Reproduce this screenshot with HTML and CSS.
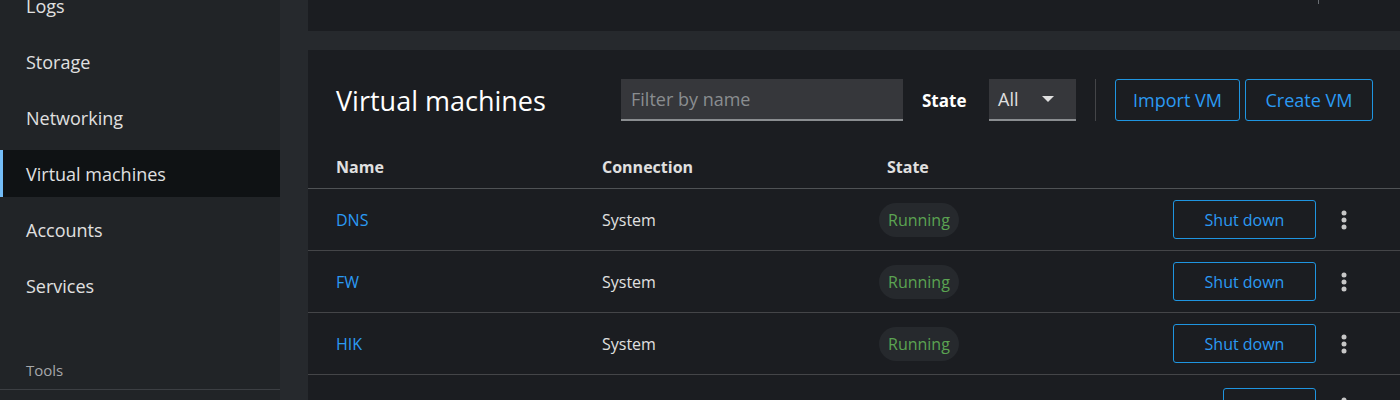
FILE: index.html
```html
<!DOCTYPE html>
<html lang="en">
<head>
    <meta charset="UTF-8">
    <title>Virtual machines</title>
    <link rel="stylesheet" href="styles.css">
</head>
<body>
    <nav class="sidebar">
        <ul class="nav-list">
            <li class="nav-item">Logs</li>
            <li class="nav-item">Storage</li>
            <li class="nav-item">Networking</li>
            <li class="nav-item active">Virtual machines</li>
            <li class="nav-item">Accounts</li>
            <li class="nav-item">Services</li>
        </ul>
        <div class="nav-section">
            <div class="nav-section-title">Tools</div>
            <ul class="nav-list">
                <li class="nav-item">Applications</li>
            </ul>
        </div>
    </nav>

    <main class="page">
        <div class="top-card">
            <span class="top-divider"></span>
        </div>

        <section class="card">
            <div class="card-header">
                <h1 class="card-title">Virtual machines</h1>
                <div class="toolbar">
                    <input class="filter" type="text" placeholder="Filter by name">
                    <span class="toolbar-label">State</span>
                    <div class="select">
                        <span>All</span>
                        <svg width="12" height="8" viewBox="0 0 12 8"><path d="M0 1h12L6 7z" fill="#e0e0e0"/></svg>
                    </div>
                    <span class="toolbar-divider"></span>
                    <button class="btn btn-import">Import VM</button>
                    <button class="btn btn-create">Create VM</button>
                </div>
            </div>

            <div class="table">
                <div class="row head">
                    <div>Name</div>
                    <div>Connection</div>
                    <div>State</div>
                    <div></div>
                    <div></div>
                </div>
                <div class="row">
                    <div><a class="vm-link">DNS</a></div>
                    <div>System</div>
                    <div><span class="badge">Running</span></div>
                    <div class="action"><button class="btn btn-sm">Shut down</button></div>
                    <div class="kebab"><svg width="6" height="20" viewBox="0 0 6 20"><circle cx="3" cy="3" r="2.5"/><circle cx="3" cy="10" r="2.5"/><circle cx="3" cy="17" r="2.5"/></svg></div>
                </div>
                <div class="row">
                    <div><a class="vm-link">FW</a></div>
                    <div>System</div>
                    <div><span class="badge">Running</span></div>
                    <div class="action"><button class="btn btn-sm">Shut down</button></div>
                    <div class="kebab"><svg width="6" height="20" viewBox="0 0 6 20"><circle cx="3" cy="3" r="2.5"/><circle cx="3" cy="10" r="2.5"/><circle cx="3" cy="17" r="2.5"/></svg></div>
                </div>
                <div class="row">
                    <div><a class="vm-link">HIK</a></div>
                    <div>System</div>
                    <div><span class="badge">Running</span></div>
                    <div class="action"><button class="btn btn-sm">Shut down</button></div>
                    <div class="kebab"><svg width="6" height="20" viewBox="0 0 6 20"><circle cx="3" cy="3" r="2.5"/><circle cx="3" cy="10" r="2.5"/><circle cx="3" cy="17" r="2.5"/></svg></div>
                </div>
                <div class="row row-tall">
                    <div><a class="vm-link">Win10</a></div>
                    <div>System</div>
                    <div><span class="state-off">Shut off</span></div>
                    <div class="action"><button class="btn btn-sm btn-run">Run</button></div>
                    <div class="kebab"><svg width="6" height="20" viewBox="0 0 6 20"><circle cx="3" cy="3" r="2.5"/><circle cx="3" cy="10" r="2.5"/><circle cx="3" cy="17" r="2.5"/></svg></div>
                </div>
            </div>
        </section>
    </main>
</body>
</html>
```

FILE: styles.css
```css
html,
body {
    margin: 0;
    height: 400px;
    overflow: hidden;
}

body {
    display: flex;
    background: #26292d;
    font-family: "Open Sans", "Liberation Sans", sans-serif;
    color: #e0e0e0;
}

ul {
    list-style: none;
    margin: 0;
    padding: 0;
}

/* 侧边栏 */
.sidebar {
    flex: none;
    width: 280px;
    height: 400px;
    overflow: hidden;
    background: #212427;
    display: flex;
    flex-direction: column;
}

.sidebar > .nav-list {
    margin-top: -18px;
}

.nav-list {
    display: flex;
    flex-direction: column;
    gap: 9px;
}

.nav-item {
    flex: none;
    height: 47px;
    line-height: 49px;
    padding-left: 26px;
    font-size: 18px;
    color: #e0e0e0;
}

.nav-item.active {
    background: #0f1214;
    border-left: 3px solid #73bcf7;
    padding-left: 23px;
}

.nav-section {
    flex: none;
    margin-top: 51px;
}

.nav-section-title {
    padding: 0 26px 9px;
    line-height: 20px;
    font-size: 15px;
    color: #a6a8ab;
    border-bottom: 1px solid #3c3f43;
}

/* 主体 */
.page {
    flex: 1;
    min-width: 0;
    height: 400px;
    overflow: hidden;
    padding-left: 28px;
    display: flex;
    flex-direction: column;
}

.top-card {
    flex: none;
    height: 31px;
    background: #1b1d21;
    display: flex;
    justify-content: flex-end;
}

.top-divider {
    width: 1px;
    height: 4px;
    margin-right: 81px;
    background: #6a6e73;
}

.card {
    flex: none;
    margin-top: 19px;
    background: #1b1d21;
    padding-bottom: 40px;
}

.card-header {
    display: flex;
    align-items: center;
    padding: 29px 27px 0 28px;
}

.card-title {
    margin: 0;
    font-size: 27px;
    font-weight: 400;
    color: #fff;
}

.toolbar {
    margin-left: auto;
    display: flex;
    align-items: center;
}

.filter {
    box-sizing: border-box;
    width: 282px;
    height: 42px;
    border: none;
    border-bottom: 2px solid #8a8d90;
    background: #36373b;
    padding: 0 10px;
    font-family: inherit;
    font-size: 18px;
    color: #e0e0e0;
    outline: none;
}

.filter::placeholder {
    color: #8a8d90;
}

.toolbar-label {
    width: 48px;
    margin-left: 19px;
    font-size: 17px;
    font-weight: 700;
    color: #fff;
    white-space: nowrap;
}

.select {
    box-sizing: border-box;
    margin-left: 19px;
    width: 87px;
    height: 42px;
    padding: 0 22px 0 9px;
    background: #36373b;
    border-bottom: 2px solid #8a8d90;
    display: flex;
    align-items: center;
    justify-content: space-between;
    font-size: 18px;
    color: #e0e0e0;
}

.toolbar-divider {
    width: 1px;
    height: 42px;
    margin: 0 19px;
    background: #444548;
}

.btn {
    box-sizing: border-box;
    height: 42px;
    padding: 0;
    border: 1px solid #1f95e0;
    border-radius: 3px;
    background: transparent;
    font-family: inherit;
    font-size: 18px;
    color: #2b9af3;
}

.btn-import {
    width: 125px;
}

.btn-create {
    width: 128px;
    margin-left: 5px;
}

/* 表格 */
.table {
    margin-top: 24px;
}

.row {
    display: grid;
    grid-template-columns: 266px 285px 1fr auto 56px;
    align-items: center;
    padding-left: 28px;
    padding-right: 28px;
    height: 61px;
    border-bottom: 1px solid #444548;
    font-size: 16px;
    color: #e0e0e0;
}

.row.head {
    height: 43px;
    font-weight: 700;
    border-bottom-color: #4f5255;
}

.row.row-tall {
    height: 64px;
}

.vm-link {
    color: #2b9af3;
}

.badge {
    display: inline-block;
    margin-left: -8px;
    padding: 0 9px;
    height: 34px;
    line-height: 34px;
    border-radius: 17px;
    background: #26292d;
    color: #5ba352;
}

.state-off {
    margin-left: 4px;
}

.btn-sm {
    width: 143px;
    height: 39px;
    font-size: 16px;
}

.btn-run {
    width: 93px;
}

.kebab {
    display: flex;
    justify-content: center;
    fill: #c7c7c7;
}
```
